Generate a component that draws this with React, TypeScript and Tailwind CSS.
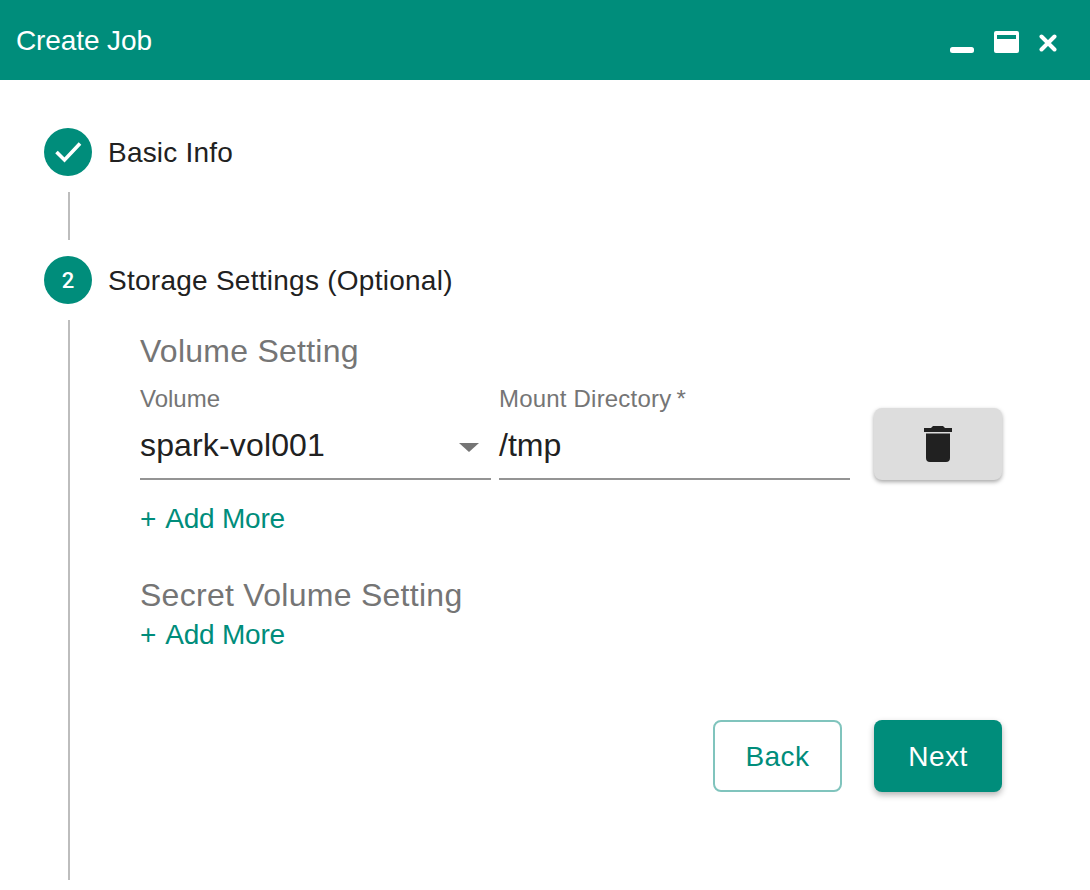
const sans = "font-['Liberation_Sans',Arial,sans-serif]";

function StepCircle({ children }: { children: React.ReactNode }) {
  return (
    <div className="flex h-12 w-12 shrink-0 items-center justify-center rounded-full bg-[#008d7b] text-white">
      {children}
    </div>
  );
}

function AddMore() {
  return (
    <div className="flex gap-[9px] text-[28px] leading-8 tracking-[-0.2px] text-[#008d7b]">
      <span>+</span>
      <span>Add More</span>
    </div>
  );
}

export default function App() {
  return (
    <div className={`h-[890px] w-[1090px] overflow-hidden bg-white text-[#212121] ${sans}`}>
      <header className="flex h-20 items-center justify-between bg-[#008d7b] pl-4 pr-[33px] text-white">
        <h1 className="mt-0.5 text-[28px] font-normal tracking-[-0.1px]">Create Job</h1>
        <div className="flex gap-5 self-stretch pt-[31px]">
          <svg width="24" height="6" viewBox="0 0 24 6" fill="#fff" className="mt-4">
            <rect x="0" y="0" width="24" height="6" rx="2.500" />
          </svg>
          <svg width="25" height="22" viewBox="0 0 25 22" fill="#fff">
            <path fillRule="evenodd" d="M2 0h21a2 2 0 0 1 2 2v18a2 2 0 0 1-2 2H2a2 2 0 0 1-2-2V2a2 2 0 0 1 2-2zm1 4v4h19V4z" />
          </svg>
          <svg width="18" height="18" viewBox="0 0 18 18" stroke="#fff" strokeWidth="4" strokeLinecap="round" className="mt-[3px]">
            <path d="M2.5 2.5l13 13M15.500 2.500l-13 13" />
          </svg>
        </div>
      </header>

      <div className="flex flex-col pl-11 pt-12">
        <div className="flex items-center gap-4">
          <StepCircle>
            <svg width="30" height="24" viewBox="0 0 30 24" fill="none" stroke="#fff" strokeWidth="3.6">
              <path d="M3.5 12l8 8L27 3.500" />
            </svg>
          </StepCircle>
          <span className="mt-0.5 text-[28px] leading-8 tracking-[0.2px]">Basic Info</span>
        </div>
        <div className="ml-6 mt-4 h-12 w-0.5 bg-[#bdbdbd]" />
        <div className="mt-4 flex items-center gap-4">
          <StepCircle>
            <span className="font-['Roboto',sans-serif] text-[22px] font-medium">2</span>
          </StepCircle>
          <span className="mt-0.5 text-[28px] leading-8 tracking-[0.26px]">Storage Settings (Optional)</span>
        </div>
        <div className="ml-6 mt-4 flex h-[560px] border-l-2 border-[#bdbdbd] pl-[70px]">
          <div className="flex w-[862px] flex-col">
            <div className="mt-[13px] text-[32px] leading-9 tracking-[0.25px] text-[#757575]">Volume Setting</div>
            <div className="mt-4 flex">
              <div className="mr-2 w-[351px]">
                <div className="text-2xl leading-7 text-[#757575]">Volume</div>
                <div className="flex h-[67px] items-start justify-between border-b-2 border-[#949494] pt-[9px] text-[32px] leading-[46px] tracking-[0.15px]">
                  <span>spark-vol001</span>
                  <svg width="20" height="9" viewBox="0 0 20 9" fill="#757575" className="mr-3 mt-[21px]">
                    <path d="M0 0h20L10 9z" />
                  </svg>
                </div>
              </div>
              <div className="w-[351px]">
                <div className="flex gap-[5px] text-2xl leading-7 tracking-[0.2px] text-[#757575]">
                  <span>Mount Directory</span>
                  <span>*</span>
                </div>
                <div className="h-[67px] border-b-2 border-[#949494] pt-[9px] text-[32px] leading-[46px]">/tmp</div>
              </div>
              <button className="ml-6 mt-[23px] flex h-[72px] w-32 items-center justify-center rounded-lg bg-[#dddddd] shadow-[0_2px_4px_rgba(0,0,0,0.35)]">
                <svg width="28" height="36" viewBox="0 0 28 36" fill="#212121">
                  <path d="M9 0h10l2 2h7v4H0V2h7zM2 7.500h24V32a4 4 0 0 1-4 4H6a4 4 0 0 1-4-4z" />
                </svg>
              </button>
            </div>
            <div className="mt-[23px]">
              <AddMore />
            </div>
            <div className="mt-[42px] text-[32px] leading-9 tracking-[0.28px] text-[#757575]">Secret Volume Setting</div>
            <div className="mt-[6px]">
              <AddMore />
            </div>
            <div className="mt-[69px] flex justify-end gap-8">
              <button className="flex h-[72px] w-[129px] items-center justify-center rounded-lg border-2 border-[#80c4bd] pt-0.5 text-[28px] tracking-[0.5px] text-[#008d7b]">
                Back
              </button>
              <button className="flex h-[72px] w-32 items-center justify-center rounded-lg bg-[#008d7b] pt-0.5 text-[28px] tracking-[0.5px] text-white shadow-[0_3px_6px_rgba(0,0,0,0.3)]">
                Next
              </button>
            </div>
          </div>
        </div>
      </div>
    </div>
  );
}
